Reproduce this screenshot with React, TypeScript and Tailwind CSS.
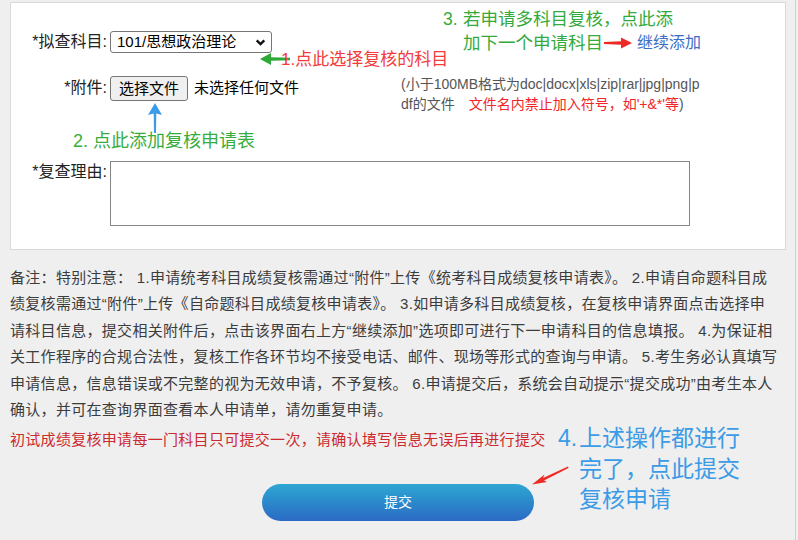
import React from 'react';

const FONT = '"Liberation Sans", "Noto Sans CJK SC", sans-serif';

const notes = [
    '备注：特别注意： 1.申请统考科目成绩复核需通过“附件”上传《统考科目成绩复核申请表》。 2.申请自命题科目成',
    '绩复核需通过“附件”上传《自命题科目成绩复核申请表》。 3.如申请多科目成绩复核，在复核申请界面点击选择申',
    '请科目信息，提交相关附件后，点击该界面右上方“继续添加”选项即可进行下一申请科目的信息填报。 4.为保证相',
    '关工作程序的合规合法性，复核工作各环节均不接受电话、邮件、现场等形式的查询与申请。 5.考生务必认真填写',
    '申请信息，信息错误或不完整的视为无效申请，不予复核。 6.申请提交后，系统会自动提示“提交成功”由考生本人',
    '确认，并可在查询界面查看本人申请单，请勿重复申请。',
];

const App = () => {
    return (
        <div className="relative w-[798px] h-[540px] bg-[#efefef] overflow-hidden flex" style={{ fontFamily: FONT }}>
            <div className="w-[795px] shrink-0">
                {/* form panel */}
                <div className="mt-[2px] ml-[10px] w-[776px] bg-white border border-[#d9d9d9] pt-[28px] pb-[23px] text-[#222]">
                    <div className="flex items-center h-[22px]">
                        <div className="w-[98px] text-right text-[16px] pr-[2px]">*拟查科目:</div>
                        <div className="ml-[1px] w-[162px] h-[22px] border border-[#767676] rounded-[3px] flex items-center justify-between pl-[6px] pr-[4px] text-[15px] text-black">
                            <span>101/思想政治理论</span>
                            <svg width="13" height="13" viewBox="0 0 12 12">
                                <path d="M2.5 4 L6 7.5 L9.5 4" fill="none" stroke="#111" strokeWidth="2.2" />
                            </svg>
                        </div>
                    </div>

                    <div className="flex items-start mt-[21px]">
                        <div className="w-[98px] text-right text-[16px] pr-[2px] pt-[4px] leading-[20px]">*附件:</div>
                        <div className="ml-[1px] w-[291px] flex items-center pt-[2px]">
                            <button className="h-[25px] px-[8px] bg-[#efefef] border border-[#767676] rounded-[3px] text-[15px] text-black leading-none">选择文件</button>
                            <span className="ml-[6px] text-[15px] text-black">未选择任何文件</span>
                        </div>
                        <div className="text-[14px] leading-[20px] text-[#555] whitespace-nowrap">
                            <div>(小于100MB格式为doc|docx|xls|zip|rar|jpg|png|p</div>
                            <div>
                                df的文件<span className="ml-[14px] text-[#f0262b]">文件名内禁止加入符号，如'+&amp;*'等</span>)
                            </div>
                        </div>
                    </div>

                    <div className="flex items-start mt-[47px]">
                        <div className="w-[98px] text-right text-[16px] pr-[2px] leading-[20px] pt-[1px]">*复查理由:</div>
                        <textarea className="ml-[1px] w-[580px] h-[65px] border border-[#858585] resize-none bg-white" />
                    </div>
                </div>

                {/* notes */}
                <div className="mt-[15px] ml-[10px] text-[15px] tracking-[0.3px] leading-[26.4px] text-[#3c3c3c] whitespace-nowrap">
                    {notes.map((line, i) => (
                        <div key={i}>{line}</div>
                    ))}
                    <div className="mt-[4px] leading-[26px] text-[#cc2a2e]">
                        初试成绩复核申请每一门科目只可提交一次，请确认填写信息无误后再进行提交
                    </div>
                </div>

                <div className="flex justify-center mt-[31px] pl-[1px]">
                    <button className="w-[272px] h-[37px] rounded-full bg-gradient-to-b from-[#2ea6d2] to-[#2b6ac4] text-white text-[14px]">
                        提交
                    </button>
                </div>
            </div>
            <div className="flex-1 border-l border-[#cfcfcf]" />

            {/* annotations */}
            <div className="absolute left-[443px] top-[7px] text-[17.5px] leading-[24px] text-[#34aa3c] whitespace-nowrap">
                <div><span className="inline-block w-[20px]">3.</span>若申请多科目复核，点此添</div>
                <div className="pl-[20px]">加下一个申请科目</div>
            </div>
            <svg className="absolute left-[603px] top-[36px]" width="30" height="14" viewBox="0 0 30 14">
                <path d="M1 6 L18 5.2 L18 1.5 L29 7 L18 12.5 L18 8.8 L1 8 Z" fill="#ee2a24" />
            </svg>
            <div className="absolute left-[637px] top-[33px] text-[16px] leading-[20px] text-[#3d6ec6]">继续添加</div>

            <svg className="absolute left-[259px] top-[51px]" width="32" height="16" viewBox="0 0 32 16">
                <path d="M1 8 L12 2 L12 6.2 L31 6.8 L31 9.2 L12 9.8 L12 14 Z" fill="#2fa83a" />
            </svg>
            <div className="absolute left-[281px] top-[49px] text-[17px] leading-[22px] text-[#f23b3b] whitespace-nowrap">
                1.点此选择复核的科目
            </div>

            <svg className="absolute left-[147px] top-[102px]" width="16" height="32" viewBox="0 0 16 32">
                <path d="M8 1 L15 13 L9.3 11.5 L9 31 L7 31 L6.7 11.5 L1 13 Z" fill="#3b9be6" />
            </svg>
            <div className="absolute left-[73px] top-[130px] text-[18px] leading-[22px] text-[#38ad3e] whitespace-nowrap">
                2. 点此添加复核申请表
            </div>

            <div className="absolute left-[558px] top-[423px] text-[23px] leading-[30.5px] text-[#3b9be6] whitespace-nowrap">
                <div><span className="inline-block w-[21px]">4.</span>上述操作都进行</div>
                <div className="pl-[21px]">完了，点此提交</div>
                <div className="pl-[21px]">复核申请</div>
            </div>
            <svg className="absolute left-[529px] top-[465px]" width="40" height="22" viewBox="0 0 40 22">
                <path d="M39 1.5 L14 13 L15.5 9.5 L3 19.5 L18 17 L15 15.5 L39.5 3 Z" fill="#ee2a24" />
            </svg>
        </div>
    );
};

export default App;
